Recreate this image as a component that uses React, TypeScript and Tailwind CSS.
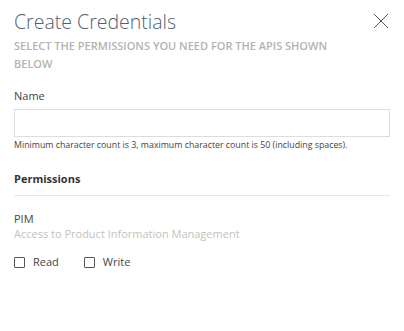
import { useState } from "react";

export default function App() {
  const [read, setRead] = useState(false);
  const [write, setWrite] = useState(false);

  return (
    <div className="w-[404px] h-[331px] bg-white px-[14px] text-[#333] font-['Open_Sans',sans-serif]">
      {/* Header */}
      <div className="flex items-start justify-between pt-[8px]">
        <h1 className="text-[19.5px] font-light leading-[28px] text-[#4e5f72]">Create Credentials</h1>
        <button className="mt-[5px] mr-[1px] text-[#555]" aria-label="Close">
          <svg width="16" height="16" viewBox="0 0 16 16" fill="none" stroke="currentColor" strokeWidth="1">
            <path d="M1 1L15 15M15 1L1 15" />
          </svg>
        </button>
      </div>
      <p className="mt-[1px] pr-[40px] text-[11px] font-semibold uppercase leading-[18px] text-[#b3b3b3]">
        Select the permissions you need for the APIs shown below
      </p>

      {/* Name */}
      <label className="mt-[15px] block text-[11px] leading-[16px] text-[#444]">Name</label>
      <input className="mt-[5px] block h-[28px] w-full border border-[#ddd] bg-white px-2 text-[11px] outline-none" />
      <p className="mt-[1px] text-[8.8px] leading-[14px] text-[#444]">
        Minimum character count is 3, maximum character count is 50 (including spaces).
      </p>

      {/* Permissions */}
      <h2 className="mt-[19px] pb-[8px] text-[11px] font-bold leading-[16px] text-[#333] border-b border-[#e8e8e8]">
        Permissions
      </h2>

      <div className="mt-[16px] text-[11px] leading-[14px] text-[#444]">PIM</div>
      <div className="text-[11px] leading-[15px] text-[#c2c2c2]">Access to Product Information Management</div>

      <div className="mt-[13px] flex items-center gap-[25px] text-[11px] text-[#444]">
        <label className="flex items-center gap-[8px]">
          <input
            type="checkbox"
            checked={read}
            onChange={() => setRead(!read)}
            className="h-[11px] w-[11px] appearance-none rounded-[1px] border border-[#555] bg-white checked:bg-[#555]"
          />
          Read
        </label>
        <label className="flex items-center gap-[8px]">
          <input
            type="checkbox"
            checked={write}
            onChange={() => setWrite(!write)}
            className="h-[11px] w-[11px] appearance-none rounded-[1px] border border-[#555] bg-white checked:bg-[#555]"
          />
          Write
        </label>
      </div>
    </div>
  );
}
